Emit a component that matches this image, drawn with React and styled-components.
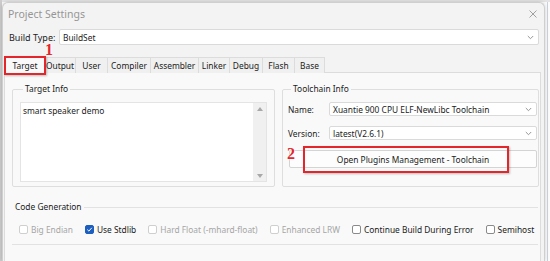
import React from 'react';
import styled, { createGlobalStyle } from 'styled-components';

const GlobalStyle = createGlobalStyle`
  html, body {
    margin: 0;
    padding: 0;
  }
  body {
    width: 550px;
    height: 261px;
    overflow: hidden;
    background: #ffffff;
    font-family: 'Noto Sans', 'Liberation Sans', sans-serif;
    color: #1b1b1b;
  }
`;

const Desktop = styled.div`
  width: 550px;
  height: 261px;
  box-sizing: border-box;
  padding: 2px 5px 0 2px;
  display: flex;
  background:
    linear-gradient(to right, #cdcdcd 0 2px, transparent 2px),
    linear-gradient(to bottom, #e4e4e4 0 2px, transparent 2px),
    linear-gradient(to right, transparent 547px, #c9d3de 547px 548px, transparent 548px),
    #fbfbfb;
`;

const Dialog = styled.div`
  flex: 1;
  display: flex;
  flex-direction: column;
  box-sizing: border-box;
  background: #f3f3f3;
  border: 1px solid #cfcfcf;
  border-bottom: none;
  border-radius: 6px 6px 0 0;
  box-shadow: 0 0 4px rgba(0, 0, 0, 0.18);
`;

const TitleBar = styled.div`
  height: 21px;
  display: flex;
  align-items: center;
  justify-content: space-between;
  padding: 0 7px 0 5px;
`;

const Title = styled.span`
  font-size: 10.5px;
  color: #969696;
`;

const CloseButton = styled.span`
  display: flex;
  align-items: center;
`;

const BuildRow = styled.div`
  display: flex;
  align-items: center;
  padding: 5px 5px 0 6px;
`;

const FieldLabel = styled.span`
  flex: 0 0 ${p => p.w}px;
  font-size: ${p => p.size || 8.4}px;
  color: #222;
  white-space: nowrap;
`;

const SelectBox = styled.div`
  flex: 1;
  height: ${p => p.h}px;
  box-sizing: border-box;
  display: flex;
  align-items: center;
  justify-content: space-between;
  padding: 0 4px 0 3px;
  background: #ffffff;
  border: 1px solid #dadada;
  border-radius: 2px;
  font-size: 8.4px;
  color: #1b1b1b;
`;

const TabRow = styled.div`
  display: flex;
  margin-top: 12px;
  padding-left: 2px;
`;

const Tab = styled.div`
  position: relative;
  flex: 0 0 ${p => p.w}px;
  height: 16px;
  box-sizing: border-box;
  display: flex;
  align-items: center;
  justify-content: center;
  margin-right: -1px;
  border: 1px solid #dcdcdc;
  border-bottom: none;
  background: ${p => (p.active ? '#f9f9f9' : '#f0f0f0')};
  font-size: 8.4px;
  color: #1b1b1b;
  z-index: ${p => (p.active ? 2 : 1)};
`;

const RedFrame = styled.div`
  position: absolute;
  left: ${p => p.l}px;
  top: ${p => p.t}px;
  width: ${p => p.w}px;
  height: ${p => p.h}px;
  box-sizing: border-box;
  border: 2px solid #e3262b;
  box-shadow: 1px 1px 2px rgba(0, 0, 0, 0.25);
  pointer-events: none;
`;

const StepNumber = styled.span`
  position: absolute;
  left: ${p => p.l}px;
  top: ${p => p.t}px;
  font-family: 'Liberation Serif', 'DejaVu Serif', serif;
  font-size: 16px;
  font-weight: 700;
  line-height: 12px;
  color: #e3262b;
  text-shadow: 0 0 1px #fff, 0 0 1px #fff, 0 0 2px #fff;
`;

const Panel = styled.div`
  flex: 1;
  margin: -1px 3px 0 1px;
  box-sizing: border-box;
  background: #f9f9f9;
  border: 1px solid #dcdcdc;
  border-bottom: none;
  padding: 10px 0 0 7px;
`;

const Columns = styled.div`
  display: grid;
  grid-template-columns: 263px 257px;
  column-gap: 7px;
`;

const GroupBox = styled.fieldset`
  margin: 0;
  min-width: 0;
  padding: 7px ${p => p.pr}px 4px ${p => p.pl}px;
  border: 1px solid #dedede;
  border-radius: 2px;
`;

const GroupTitle = styled.legend`
  margin-left: 3px;
  padding: 0 2px;
  font-size: 8.4px;
  line-height: 12px;
  color: #1b1b1b;
`;

const TextArea = styled.div`
  height: 80px;
  box-sizing: border-box;
  display: flex;
  background: #ffffff;
  border: 1px solid #e4e4e4;
`;

const TextContent = styled.div`
  flex: 1;
  padding: 1px 2px;
  font-size: 8.4px;
  line-height: 13px;
`;

const ScrollBar = styled.div`
  flex: 0 0 13px;
  display: flex;
  flex-direction: column;
  align-items: center;
  justify-content: space-between;
  padding: 4px 0 3px;
  background: #f0f0f0;
`;

const Arrow = styled.span`
  width: 0;
  height: 0;
  border-left: 3px solid transparent;
  border-right: 3px solid transparent;
  ${p => (p.down ? 'border-top' : 'border-bottom')}: 4px solid #a8a8a8;
`;

const FormRow = styled.div`
  display: flex;
  align-items: center;
  margin-bottom: 10px;
`;

const ButtonWrap = styled.div`
  position: relative;
  margin-left: 1px;
`;

const Button = styled.div`
  height: 18px;
  box-sizing: border-box;
  display: flex;
  align-items: center;
  justify-content: center;
  background: #fdfdfd;
  border: 1px solid #d4d4d4;
  border-radius: 2px;
  font-size: 8.4px;
  color: #1b1b1b;
`;

const SectionHeader = styled.div`
  display: flex;
  align-items: center;
  margin-top: 14px;
  padding-left: 3px;
`;

const SectionTitle = styled.span`
  font-size: 8.4px;
  line-height: 12px;
  color: #1b1b1b;
`;

const Rule = styled.div`
  flex: 1;
  height: 1px;
  background: #e2e2e2;
  margin-left: ${p => p.ml || 0}px;
  margin-right: 2px;
`;

const CheckRow = styled.div`
  display: flex;
  align-items: center;
  gap: 12px;
  margin-top: 10px;
  padding-left: 7px;
  height: 12px;
`;

const CheckItem = styled.label`
  display: flex;
  align-items: center;
  gap: 3px;
  font-size: 8.4px;
  color: ${p => (p.disabled ? '#a6a6a6' : '#1b1b1b')};
  white-space: nowrap;
`;

const Box = styled.span`
  width: 9px;
  height: 9px;
  box-sizing: border-box;
  display: flex;
  align-items: center;
  justify-content: center;
  border-radius: 2px;
  border: 1px solid ${p => (p.checked ? '#1d5fbf' : p.disabled ? '#cfcfcf' : '#8a8a8a')};
  background: ${p => (p.checked ? '#1d5fbf' : '#ffffff')};
`;

const BottomRule = styled.div`
  height: 1px;
  background: #e2e2e2;
  margin: 9px 2px 0 0;
`;

const Chevron = () => (
  <svg width="7" height="5" viewBox="0 0 7 5">
    <path d="M0.8 1 L3.5 3.7 L6.2 1" fill="none" stroke="#8a8a8a" strokeWidth="0.9" />
  </svg>
);

const Select = ({ value, h }) => (
  <SelectBox h={h}>
    <span>{value}</span>
    <Chevron />
  </SelectBox>
);

const Checkbox = ({ label, checked, disabled }) => (
  <CheckItem disabled={disabled}>
    <Box checked={checked} disabled={disabled}>
      {checked && (
        <svg width="7" height="7" viewBox="0 0 7 7">
          <path d="M1.3 3.6 L2.9 5.1 L5.8 1.8" fill="none" stroke="#ffffff" strokeWidth="1" />
        </svg>
      )}
    </Box>
    {label}
  </CheckItem>
);

const tabs = [
  { name: 'Target', w: 40 },
  { name: 'Output', w: 32 },
  { name: 'User', w: 33 },
  { name: 'Compiler', w: 44 },
  { name: 'Assembler', w: 49 },
  { name: 'Linker', w: 32 },
  { name: 'Debug', w: 34 },
  { name: 'Flash', w: 33 },
  { name: 'Base', w: 31 },
];

const options = [
  { label: 'Big Endian', disabled: true },
  { label: 'Use Stdlib', checked: true },
  { label: 'Hard Float (-mhard-float)', disabled: true },
  { label: 'Enhanced LRW', disabled: true },
  { label: 'Continue Build During Error' },
  { label: 'Semihost' },
];

export default function App() {
  return (
    <>
      <GlobalStyle />
      <Desktop>
        <Dialog>
          <TitleBar>
            <Title>Project Settings</Title>
            <CloseButton>
              <svg width="8" height="8" viewBox="0 0 8 8">
                <path d="M0.5 0.5 L7.5 7.5 M7.5 0.5 L0.5 7.5" stroke="#8a8a8a" strokeWidth="0.8" />
              </svg>
            </CloseButton>
          </TitleBar>

          <BuildRow>
            <FieldLabel w={50} size={9}>Build Type:</FieldLabel>
            <Select value="BuildSet" h={16} />
          </BuildRow>

          <TabRow>
            {tabs.map((t, i) => (
              <Tab key={t.name} w={t.w} active={i === 0}>
                {t.name}
                {i === 0 && (
                  <>
                    <RedFrame l={-2} t={-2} w={42} h={19} />
                    <StepNumber l={39} t={-14}>1</StepNumber>
                  </>
                )}
              </Tab>
            ))}
          </TabRow>

          <Panel>
            <Columns>
              <GroupBox pl={7} pr={7}>
                <GroupTitle>Target Info</GroupTitle>
                <TextArea>
                  <TextContent>smart speaker demo</TextContent>
                  <ScrollBar>
                    <Arrow />
                    <Arrow down />
                  </ScrollBar>
                </TextArea>
              </GroupBox>

              <GroupBox pl={5} pr={1}>
                <GroupTitle>Toolchain Info</GroupTitle>
                <FormRow>
                  <FieldLabel w={41}>Name:</FieldLabel>
                  <Select value="Xuantie 900 CPU ELF-NewLibc Toolchain" h={14} />
                </FormRow>
                <FormRow>
                  <FieldLabel w={41}>Version:</FieldLabel>
                  <Select value="latest(V2.6.1)" h={14} />
                </FormRow>
                <ButtonWrap>
                  <Button>Open Plugins Management - Toolchain</Button>
                  <RedFrame l={14} t={-4} w={206} h={27} />
                  <StepNumber l={-2} t={-2}>2</StepNumber>
                </ButtonWrap>
              </GroupBox>
            </Columns>

            <SectionHeader>
              <SectionTitle>Code Generation</SectionTitle>
              <Rule ml={2} />
            </SectionHeader>

            <CheckRow>
              {options.map(o => (
                <Checkbox key={o.label} {...o} />
              ))}
            </CheckRow>

            <BottomRule />
          </Panel>
        </Dialog>
      </Desktop>
    </>
  );
}
